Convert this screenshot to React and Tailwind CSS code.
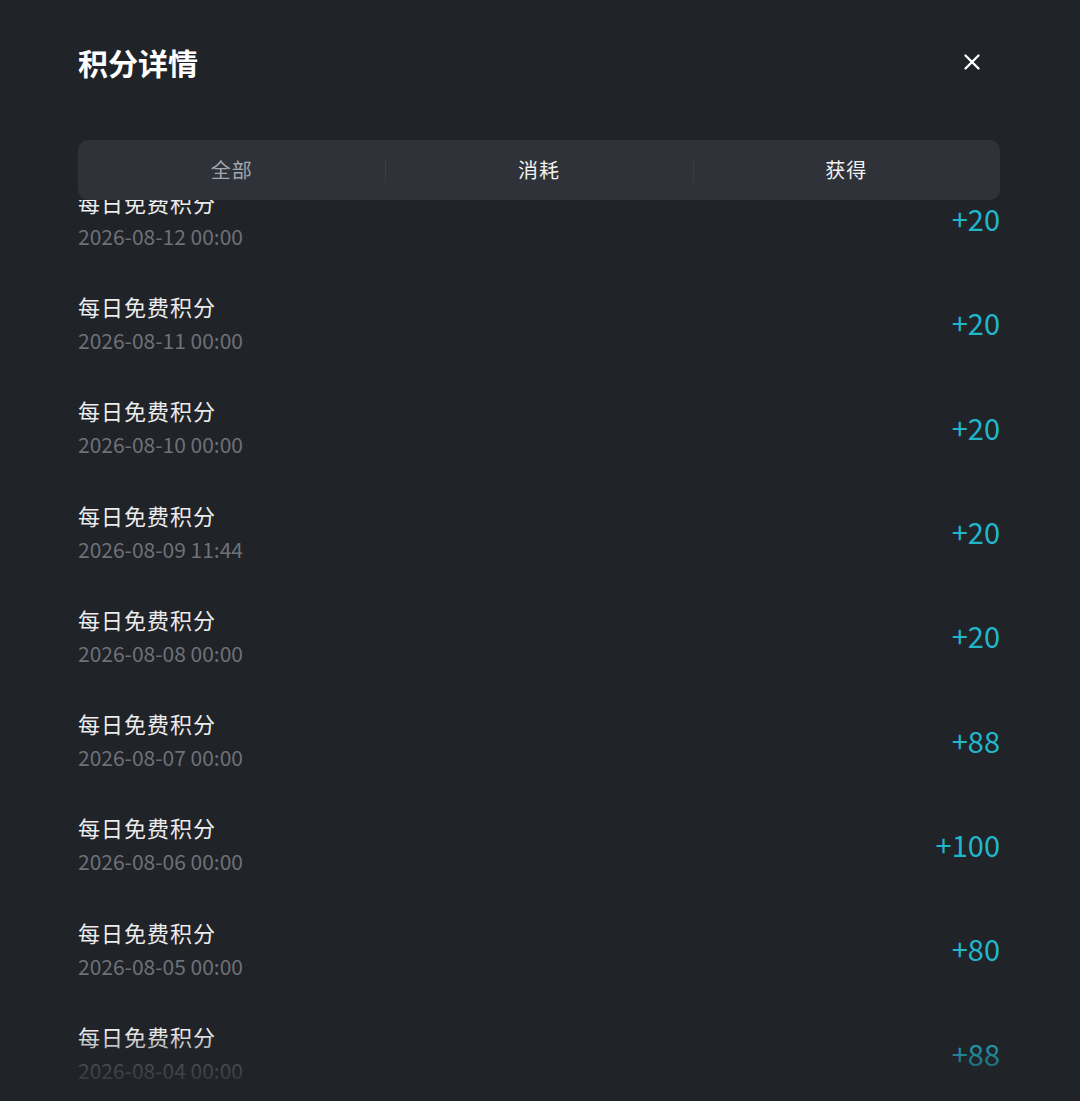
import React from 'react';

const records = [
    { title: '每日免费积分', time: '2026-08-12 00:00', value: '+20' },
    { title: '每日免费积分', time: '2026-08-11 00:00', value: '+20' },
    { title: '每日免费积分', time: '2026-08-10 00:00', value: '+20' },
    { title: '每日免费积分', time: '2026-08-09 11:44', value: '+20' },
    { title: '每日免费积分', time: '2026-08-08 00:00', value: '+20' },
    { title: '每日免费积分', time: '2026-08-07 00:00', value: '+88' },
    { title: '每日免费积分', time: '2026-08-06 00:00', value: '+100' },
    { title: '每日免费积分', time: '2026-08-05 00:00', value: '+80' },
    { title: '每日免费积分', time: '2026-08-04 00:00', value: '+88' },
    { title: '每日免费积分', time: '2026-08-03 00:00', value: '+20' },
];

const tabs = ['全部', '消耗', '获得'];

const App = () => {
    return (
        <div
            className="h-[1101px] w-full overflow-hidden bg-[#202328] flex flex-col px-[78px] pr-[80px]"
            style={{ fontFamily: '"Noto Sans CJK SC", "Noto Sans", sans-serif' }}
        >
            <header className="flex items-center justify-between pt-[41px] h-[83px]">
                <h1 className="text-[30px] leading-[40px] font-bold text-white">积分详情</h1>
                <button className="w-[24px] h-[24px] flex items-center justify-center text-white mr-[16px]">
                    <svg width="20" height="20" viewBox="0 0 20 20" fill="none" stroke="currentColor" strokeWidth="2.4" strokeLinecap="round">
                        <path d="M3.5 3.5 L16.5 16.5 M16.5 3.5 L3.5 16.5" />
                    </svg>
                </button>
            </header>

            <nav className="relative z-10 mt-[57px] h-[60px] rounded-[10px] bg-[#2f3239] flex items-center">
                {tabs.map((t, i) => (
                    <div key={t} className="flex-1 flex items-center justify-center relative h-full">
                        {i > 0 && <span className="absolute left-0 top-[20px] h-[22px] w-px bg-[#3a3d44]" />}
                        <span className={`text-[20px] tracking-[1px] ${i === 0 ? 'text-[#a3a7ad]' : 'text-[#f2f2f2]'}`}>{t}</span>
                    </div>
                ))}
            </nav>

            <div className="relative flex-1 overflow-hidden">
                <div className="-mt-[34px]">
                    {records.map((r, i) => (
                        <div key={i} className="h-[104.3px] flex items-center justify-between">
                            <div className="flex flex-col gap-[7px]">
                                <span className="text-[22px] leading-[28px] tracking-[1px] text-[#ececec]">{r.title}</span>
                                <span className="text-[21px] leading-[26px] text-[#6e7177]">{r.time}</span>
                            </div>
                            <span className="text-[29px] leading-[34px] text-[#22b6cb]">{r.value}</span>
                        </div>
                    ))}
                </div>
                <div className="pointer-events-none absolute left-0 right-0 bottom-0 h-[70px] bg-gradient-to-b from-transparent to-[#202328]" />
            </div>
        </div>
    );
};

export default App;
